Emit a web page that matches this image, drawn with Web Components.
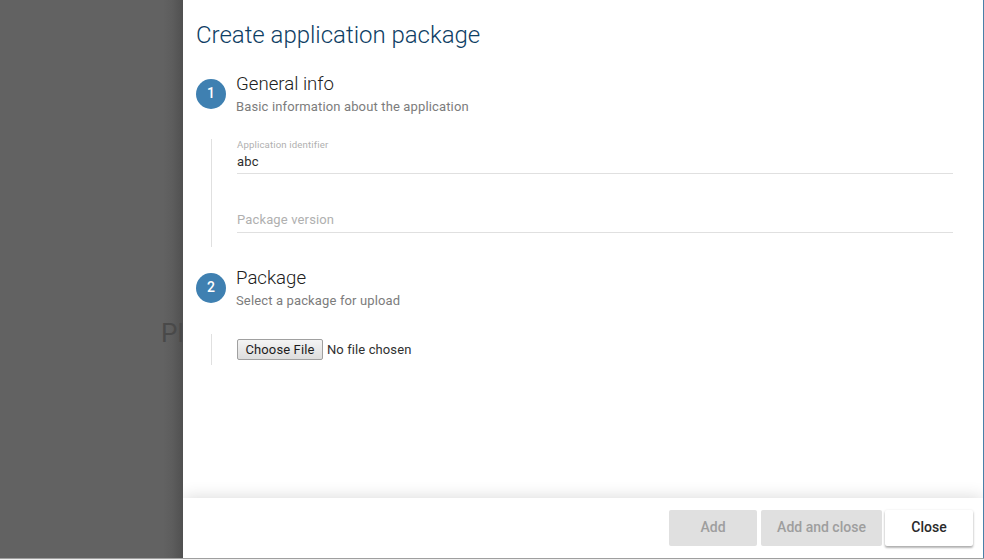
<!DOCTYPE html>
<html lang="en">
<head>
<meta charset="utf-8">
<title>Create application package</title>
<style>
html,body{margin:0;height:100%;overflow:hidden;background:#626262;font-family:Roboto,sans-serif}
</style>
</head>
<body>
<app-shell>
  <side-panel heading="Create application package">
    <form-step number="1" heading="General info" hint="Basic information about the application">
      <text-field label="Application identifier" value="abc"></text-field>
      <text-field label="Package version"></text-field>
    </form-step>
    <form-step number="2" heading="Package" hint="Select a package for upload">
      <file-picker></file-picker>
    </form-step>
    <action-button slot="actions" disabled>Add</action-button>
    <action-button slot="actions" disabled wide>Add and close</action-button>
    <action-button slot="actions">Close</action-button>
  </side-panel>
</app-shell>
<script>
const define = (name, render) => customElements.define(name, class extends HTMLElement {
  connectedCallback() {
    if (!this.shadowRoot) this.attachShadow({ mode: 'open' }).innerHTML = render(this);
  }
});
const attr = (el, n) => el.getAttribute(n) || '';

define('app-shell', () => `
<style>
:host{display:grid;grid-template:558px 2px / 183px 800px 1px;width:984px;height:560px;box-sizing:border-box;overflow:hidden}
.back{display:flex;align-items:flex-start;justify-content:flex-end;overflow:hidden;background:linear-gradient(90deg,#626262 calc(100% - 20px),#5d5d5d calc(100% - 11px),#505050)}
.back span{width:22px;margin-top:317px;font-size:26px;line-height:32px;color:#494949;white-space:nowrap}
.edge{background:#4a80a8}
.base{grid-column:1 / -1;background:#f0f0f0;border-top:1px solid #9f9f9f}
</style>
<div class="back"><span>Pl</span></div><slot></slot><div class="edge"></div><div class="base"></div>`);

define('side-panel', el => `
<style>
:host{display:flex;flex-direction:column;background:#fff;min-height:0;overflow:hidden}
h1{margin:0;padding:19px 13px 0;font-weight:300;font-size:24px;line-height:32px;color:#0e3e64;letter-spacing:-.02px}
main{flex:1;display:flex;flex-direction:column;padding:20px 30px 0 13px}
footer{display:flex;justify-content:flex-end;gap:4px;height:60px;box-sizing:border-box;padding:12px 10px 0;background:#fff;box-shadow:0 0 16px rgba(0,0,0,.16)}
</style>
<h1>${attr(el, 'heading')}</h1>
<main><slot></slot></main>
<footer><slot name="actions"></slot></footer>`);

define('form-step', el => `
<style>
:host{display:block;margin-bottom:18px}
header{display:grid;grid-template-columns:30px 1fr;column-gap:10px;height:68px}
:host([number="2"]) header{height:69px}
.num{width:30px;height:30px;margin-top:8px;border-radius:50%;background:#3f80b1;color:#fff;font-size:14px;font-weight:500;line-height:29px;text-align:center}
h2{margin:0;padding-top:1px;font-size:18.65px;font-weight:300;line-height:25px;color:#212121}
p{margin:0;padding-top:2px;font-size:13px;line-height:15px;color:#7c7c7c;letter-spacing:.14px}
.body{display:flow-root;margin-left:15px;padding-left:25px;border-left:1px solid #e0e0e0}
</style>
<header><div class="num">${attr(el, 'number')}</div><div><h2>${attr(el, 'heading')}</h2><p>${attr(el, 'hint')}</p></div></header>
<div class="body"><slot></slot></div>`);

define('text-field', el => {
  const v = attr(el, 'value');
  return `
<style>
:host{display:block;height:35px;border-bottom:1px solid #e0e0e0;font-size:13px;letter-spacing:.13px}
:host(:first-child){margin-bottom:23px;height:34px}
:host(:last-child){margin-bottom:14px}
.float{font-size:9.65px;line-height:12px;color:#b0b0b0}
.value{padding-top:3px;line-height:15px;color:#2c2c2c}
.empty{padding-top:15px;line-height:15px;color:#b0b0b0;letter-spacing:.14px}
</style>
${v ? `<div class="float">${attr(el, 'label')}</div><div class="value">${v}</div>` : `<div class="empty">${attr(el, 'label')}</div>`}`;
});

define('file-picker', () => `
<style>
:host{display:flex;gap:4px;padding:5px 0;height:21px;font-size:13px;line-height:21px;color:#303030;letter-spacing:.1px}
button{width:86px;height:21px;box-sizing:border-box;padding:0;border:1px solid #a0a0a0;border-radius:2px;background:linear-gradient(#f4f4f4,#ddd);color:#1c1c1c;font:inherit;line-height:19px;letter-spacing:.13px}
</style>
<button type="button">Choose File</button><span>No file chosen</span>`);

define('action-button', () => `
<style>
:host{display:block;width:88px;height:36px;border-radius:2px;background:#fff;color:#2a2a2a;font-size:14px;font-weight:500;line-height:35px;text-align:center;white-space:nowrap;box-shadow:0 2px 2px rgba(0,0,0,.2),0 1px 3px rgba(0,0,0,.2)}
:host([disabled]){background:#e0e0e0;color:#9e9e9e;box-shadow:none}
:host([wide]){width:121px;margin-right:-1px}
</style>
<slot></slot>`);
</script>
</body>
</html>
